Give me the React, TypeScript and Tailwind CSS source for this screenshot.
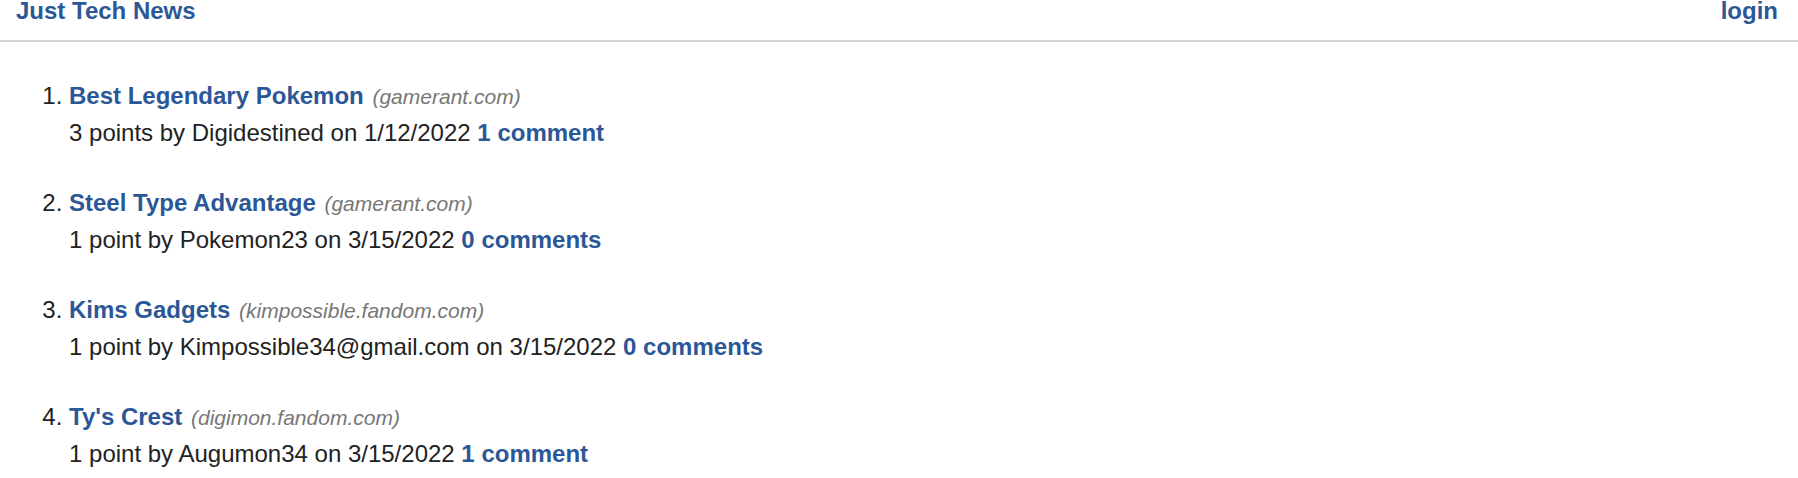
import React from 'react';

interface Post {
  title: string;
  domain: string;
  points: number;
  user: string;
  date: string;
  comments: number;
}

const posts: Post[] = [
  { title: 'Best Legendary Pokemon', domain: 'gamerant.com', points: 3, user: 'Digidestined', date: '1/12/2022', comments: 1 },
  { title: 'Steel Type Advantage', domain: 'gamerant.com', points: 1, user: 'Pokemon23', date: '3/15/2022', comments: 0 },
  { title: 'Kims Gadgets', domain: 'kimpossible.fandom.com', points: 1, user: 'Kimpossible34@gmail.com', date: '3/15/2022', comments: 0 },
  { title: "Ty's Crest", domain: 'digimon.fandom.com', points: 1, user: 'Augumon34', date: '3/15/2022', comments: 1 },
];

export default function App() {
  return (
    <div className="min-h-screen bg-white text-[#222] text-[24px] font-['Liberation_Sans',Arial,sans-serif]">
      {/* Header */}
      <header className="flex justify-between items-start h-[42px] pl-[16px] pr-[20px] border-b-2 border-[#d3d3d3]">
        <a href="#" className="font-bold text-[#2b5797] leading-[22px]">Just Tech News</a>
        <a href="#" className="font-bold text-[#2b5797] leading-[22px]">login</a>
      </header>

      {/* Posts */}
      <ol className="list-decimal pl-[69px] pt-[36px]">
        {posts.map((post) => (
          <li key={post.title} className="mb-[34px] leading-[36px]">
            <div>
              <a href="#" className="font-bold text-[#2b5797]">{post.title}</a>{' '}
              <span className="italic text-[#777] text-[21px] ml-[2px]">({post.domain})</span>
            </div>
            <div>
              {post.points} {post.points === 1 ? 'point' : 'points'} by {post.user} on {post.date}{' '}
              <a href="#" className="font-bold text-[#2b5797]">
                {post.comments} {post.comments === 1 ? 'comment' : 'comments'}
              </a>
            </div>
          </li>
        ))}
      </ol>
    </div>
  );
}
